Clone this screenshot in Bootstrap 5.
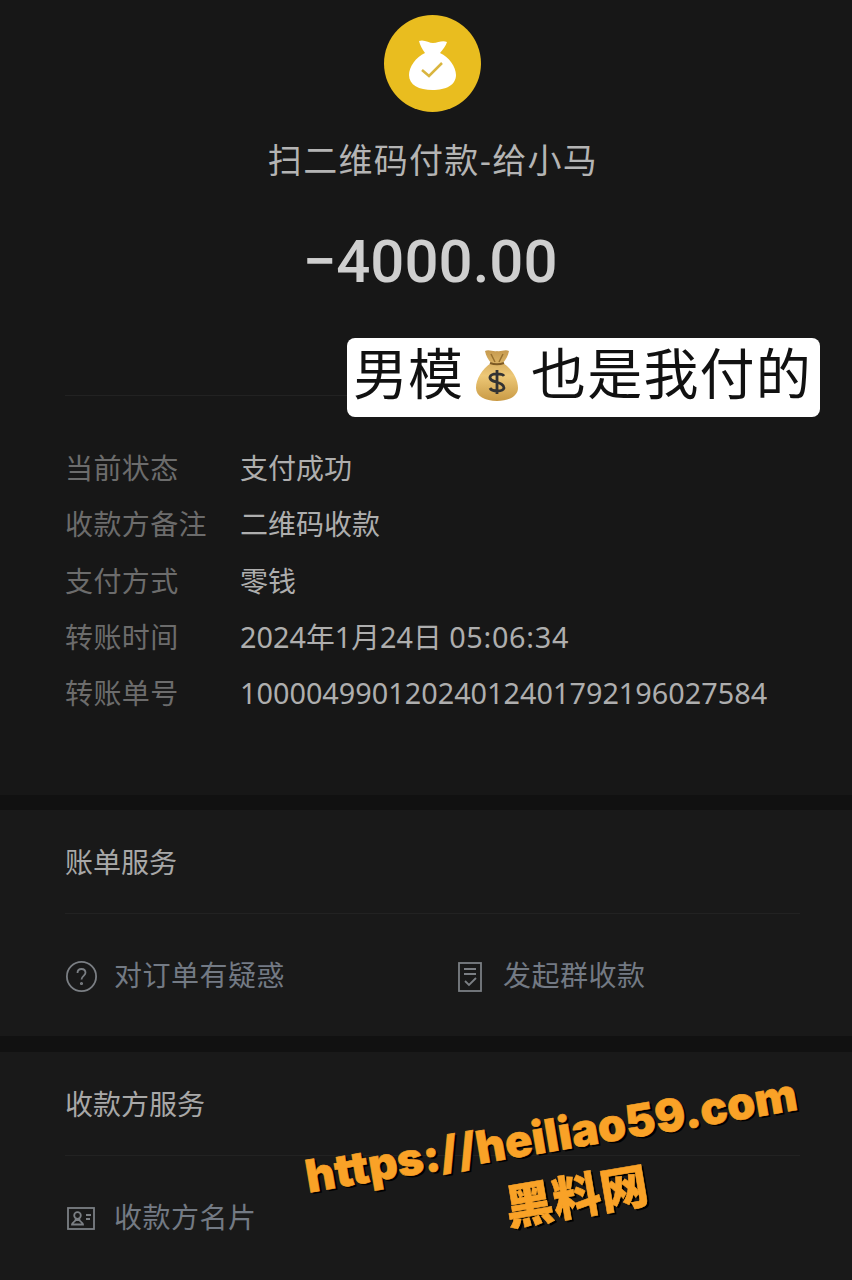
<!DOCTYPE html>
<html lang="zh-CN">
  <head>
    <meta charset="UTF-8" />
    <meta name="viewport" content="width=device-width, initial-scale=1.0" />
    <title>账单详情</title>
    <link href="https://cdn.jsdelivr.net/npm/bootstrap@5.3.1/dist/css/bootstrap.min.css" rel="stylesheet" />
    <style>
      body {
        background: #111;
        width: 852px;
        height: 1280px;
        overflow: hidden;
        font-family: "Liberation Sans", "Noto Sans CJK SC", sans-serif;
        font-size: 28px;
      }
      .sheet { background: #191919; }
      .sheet-main { height: 795px; padding: 15px 52px 0 65px; background: #171717; }
      .sheet-bill { height: 226px; margin-top: 15px; padding: 0 52px 0 65px; }
      .sheet-payee { height: 228px; margin-top: 16px; padding: 0 52px 0 65px; }
      .pay-logo { width: 97px; height: 97px; background: #e9bd1f; }
      .pay-title { font-size: 34px; line-height: 40px; color: #b4b4b4; letter-spacing: 1.3px; margin-top: 29px; margin-left: 1px; }
      .pay-amount {
        font-family: Roboto, "Liberation Sans", sans-serif;
        font-weight: 500;
        font-size: 60px;
        line-height: 64px;
        color: #cfcfcf;
        margin-top: 49px;
        margin-right: 5px;
      }
      .rule { height: 1px; background: #222; }
      .rule-top { margin-top: 101px; }
      .info-list { margin-top: 44px; }
      .info-row { height: 56.3px; line-height: 56px; }
      .info-key { width: 175px; color: #6c6c6c; letter-spacing: .4px; }
      .info-val { color: #aeaeae; white-space: nowrap; font-family: "Noto Sans", "Noto Sans CJK SC", sans-serif; }
      .num-text { font-size: 28.8px; }
      .time-text { letter-spacing: .7px; }
      .section-head { height: 103px; line-height: 108px; color: #a8a8a8; }
      .link-row { height: 122px; color: #737a84; letter-spacing: .5px; padding-top: 3px; }
      .link-item { width: 393px; gap: 16px; }
      .link-tight { gap: 21px; }
      .card-ico { margin-left: 2px; gap: 19px; }
      .overlay-tag {
        position: absolute;
        left: 347px;
        top: 338px;
        width: 473px;
        height: 79px;
        padding: 0 0 4px 6px;
        background: #fff;
        border-radius: 8px;
        color: #111;
        font-size: 55px;
        line-height: 1;
        gap: 12px;
      }
      .tag-wide { letter-spacing: 1.2px; }
      .tag-bag { margin-bottom: 2px; }
      .watermark {
        position: absolute;
        left: 303px;
        top: 1103px;
        width: 506px;
        transform: rotate(-9.6deg);
        color: #f9a227;
        font-family: Inter, "Noto Sans CJK SC", sans-serif;
        font-weight: 900;
        -webkit-text-stroke: .6px #f9a227;
        text-shadow: 2px 2px 0 #000;
      }
      .mark-url { font-size: 45px; line-height: 64px; white-space: nowrap; }
      .mark-name { font-size: 48px; line-height: 58px; margin-left: 30px; font-family: "Noto Sans CJK SC", sans-serif; font-weight: 900; }
    </style>
  </head>
  <body class="position-relative m-0">
    <section class="sheet sheet-main">
      <div class="d-flex flex-column align-items-center">
        <div class="pay-logo rounded-circle d-flex align-items-center justify-content-center">
          <svg width="47" height="52" viewBox="0 0 47 52">
            <path d="M10 3C15 1 20 5 24 5 29 5 33 2 38 4 37 8 34 11 31 15 40 19 47 29 47 37 47 47 37 52 23.500 52 10 52 0 47 0 37 0 29 7 19 16 15 13 11 11 7 10 3Z" fill="#fff" />
            <path d="M13 32l7 6 13-13" fill="none" stroke="#d9b53f" stroke-width="2.500" />
          </svg>
        </div>
        <div class="pay-title">扫二维码付款-给小马</div>
        <div class="pay-amount">−4000.00</div>
      </div>
      <div class="rule rule-top"></div>
      <div class="info-list">
        <div class="info-row d-flex align-items-baseline"><div class="info-key">当前状态</div><div class="info-val">支付成功</div></div>
        <div class="info-row d-flex align-items-baseline"><div class="info-key">收款方备注</div><div class="info-val">二维码收款</div></div>
        <div class="info-row d-flex align-items-baseline"><div class="info-key">支付方式</div><div class="info-val">零钱</div></div>
        <div class="info-row d-flex align-items-baseline"><div class="info-key">转账时间</div><div class="info-val num-text">2024年1月24日 <span class="time-text">05:06:34</span></div></div>
        <div class="info-row d-flex align-items-baseline"><div class="info-key">转账单号</div><div class="info-val num-text">10000499012024012401792196027584</div></div>
      </div>
    </section>

    <section class="sheet sheet-bill">
      <div class="section-head">账单服务</div>
      <div class="rule"></div>
      <div class="link-row d-flex align-items-center">
        <div class="link-item flex-shrink-0 d-flex align-items-center">
          <svg width="33" height="33" viewBox="0 0 33 33" fill="none" stroke="#7b7f84" stroke-width="1.800">
            <circle cx="16.500" cy="16.500" r="14.600" />
            <path d="M12.500 13c0-2.500 1.800-4 4-4s4 1.500 4 3.800c0 3-4 3.200-4 6.700" />
            <circle cx="16.500" cy="23.500" r="0.700" />
          </svg>
          <span>对订单有疑惑</span>
        </div>
        <div class="link-item link-tight flex-shrink-0 d-flex align-items-center">
          <svg width="24" height="30" viewBox="0 0 24 30" fill="none" stroke="#7b7f84" stroke-width="1.800">
            <rect x="1" y="1" width="22" height="28" />
            <path d="M6 7h12M6 12h12M7 19l4 4 7-7" />
          </svg>
          <span>发起群收款</span>
        </div>
      </div>
    </section>

    <section class="sheet sheet-payee">
      <div class="section-head">收款方服务</div>
      <div class="rule"></div>
      <div class="link-row d-flex align-items-center">
        <div class="link-item card-ico flex-shrink-0 d-flex align-items-center">
          <svg width="28" height="23" viewBox="0 0 28 23" fill="none" stroke="#7b7f84" stroke-width="1.800">
            <rect x="1" y="1" width="26" height="21" />
            <circle cx="10.500" cy="8.500" r="3.300" />
            <path d="M5 17.500c0-2 3-2.500 3.500-4.500h4c.5 2 3.500 2.500 3.500 4.500z M19 8h5M19 12h4" />
          </svg>
          <span>收款方名片</span>
        </div>
      </div>
    </section>

    <div class="overlay-tag d-flex align-items-center">
      <span>男模</span>
      <svg class="tag-bag" width="44" height="52" viewBox="0 0 42 52">
        <defs>
          <linearGradient id="bagFill" x1="0" y1="0" x2="0" y2="1">
            <stop offset="0" stop-color="#c69a4f" />
            <stop offset="0.500" stop-color="#edc877" />
            <stop offset="1" stop-color="#c99a45" />
          </linearGradient>
        </defs>
        <path d="M9 2C13 0 17 3 21 2 25 3 29 0 33 2 32 7 30 10 27 14 36 20 42 30 42 39 42 47 33 52 21 52 9 52 0 47 0 39 0 30 6 20 15 14 12 10 10 7 9 2Z" fill="url(#bagFill)" />
        <path d="M14 14c4 1.500 10 1.500 14 0" fill="none" stroke="#7d5a24" stroke-width="2" />
        <path d="M15 5l4 8M27 5l-4 8" fill="none" stroke="#97702f" stroke-width="1.500" />
        <path d="M28 27c-2-3-13-3-14 1-1 6 14 4 14 11-1 4-12 4-14 0M21 21v24" fill="none" stroke="#333" stroke-width="2.800" />
      </svg>
      <span class="tag-wide">也是我付的</span>
    </div>

    <div class="watermark text-center">
      <div class="mark-url">https://heiliao59.com</div>
      <div class="mark-name">黑料网</div>
    </div>

    <script src="https://cdn.jsdelivr.net/npm/bootstrap@5.3.1/dist/js/bootstrap.bundle.min.js"></script>
  </body>
</html>
